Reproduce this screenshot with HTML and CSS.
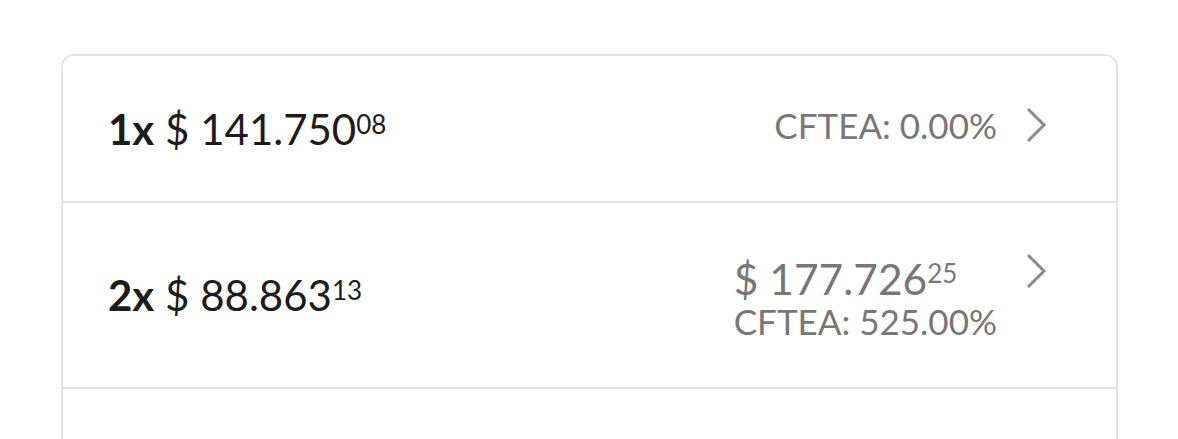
FILE: index.html
```html
<!DOCTYPE html>
<html>
<head>
<meta charset="utf-8">
<link rel="stylesheet" href="styles.css">
</head>
<body>
<div class="card">
  <div class="row row-1">
    <div class="amount"><span class="qty">1x</span> $ 141.750<span class="cents">08</span></div>
    <div class="meta">
      <div class="info">
        <div class="rate">CFTEA: 0.00%</div>
      </div>
      <svg class="chev" width="22" height="38" viewBox="0 0 22 38"><path d="M3 3 L19 19 L3 35" fill="none" stroke="#8a8a8a" stroke-width="3"/></svg>
    </div>
  </div>
  <div class="row row-2">
    <div class="amount"><span class="qty">2x</span> $ 88.863<span class="cents">13</span></div>
    <div class="meta">
      <div class="info">
        <div class="total">$ 177.726<span class="cents-sm">25</span></div>
        <div class="rate">CFTEA: 525.00%</div>
      </div>
      <svg class="chev" width="22" height="38" viewBox="0 0 22 38"><path d="M3 3 L19 19 L3 35" fill="none" stroke="#8a8a8a" stroke-width="3"/></svg>
    </div>
  </div>
  <div class="row row-3"></div>
</div>
</body>
</html>
```
FILE: styles.css
```css
html, body {
  margin: 0;
  padding: 0;
  background: #ffffff;
  overflow: hidden;
}
body {
  font-family: "Lato", "Liberation Sans", sans-serif;
}
.card {
  margin: 54px 0 0 61px;
  width: 1057px;
  box-sizing: border-box;
  border: 2px solid #e3e3e3;
  border-radius: 13px;
}
.row {
  display: flex;
  align-items: center;
  justify-content: space-between;
  padding: 0 69px 0 45px;
  border-bottom: 2px solid #e3e3e3;
}
.row-1 { height: 145px; }
.row-2 { height: 184px; }
.row-3 { height: 100px; border-bottom: none; }
.amount {
  font-size: 42px;
  color: #1c1c1c;
  line-height: 1;
  white-space: nowrap;
}
.qty {
  font-weight: 700;
}
.cents {
  font-size: 26px;
  vertical-align: 11px;
}
.meta {
  display: flex;
  align-items: flex-start;
  gap: 28px;
}
.row-1 .meta {
  margin-bottom: 8px;
}
.info {
  color: #777777;
}
.rate {
  font-size: 35px;
  line-height: 38px;
  white-space: nowrap;
}
.total {
  font-size: 42.5px;
  line-height: 46px;
  white-space: nowrap;
}
.cents-sm {
  font-size: 26px;
  vertical-align: 12px;
}
.chev {
  display: block;
}
.row-2 .chev {
  margin-top: 2px;
}
```
